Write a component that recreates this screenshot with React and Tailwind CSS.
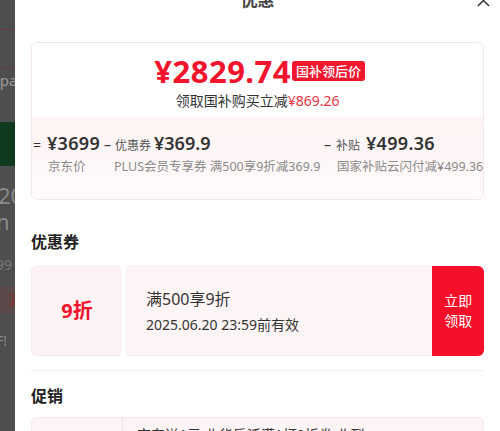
import React from "react";

const font = { fontFamily: '"Noto Sans", "Noto Sans CJK SC", sans-serif' };

const BackdropStrip = () => (
  <div className="w-[15px] shrink-0 bg-[#4e4e4e] overflow-hidden whitespace-nowrap">
    <div className="h-[30px] border-b border-[#6a3a3a]" />
    <div className="h-[38px] border-b border-[#6a3a3a]" />
    <div className="mt-[2px] text-[15px] text-[#9a9a9a] leading-[20px] -ml-[4px]">ipa</div>
    <div className="mt-[32px] h-[44px] bg-[#0f3a1e]" />
    <div className="mt-[16px] text-[22px] text-[#8a8a8a] leading-[26px] -ml-[2px]">20</div>
    <div className="text-[22px] text-[#8a8a8a] leading-[26px] -ml-[4px]">n /</div>
    <div className="mt-[22px] text-[14px] text-[#777] leading-[18px] -ml-[4px]">99</div>
    <div className="mt-[12px] h-[28px] bg-[#5a4a4a] text-[13px] text-[#8a2a2a] pl-[8px] leading-[28px]">满</div>
    <div className="mt-[18px] text-[14px] text-[#888] leading-[18px] -ml-[4px]">F!</div>
  </div>
);

const PriceCard = () => (
  <div className="mx-[16px] rounded-[6px] border border-[#f6e6e8]">
    <div className="bg-white rounded-t-[6px] pt-[11px] pb-[7px] flex flex-col items-center">
      <div className="flex items-center gap-[1px] ml-[4px]">
        <span className="text-[#f2132c] font-bold text-[31px] leading-[34px] tracking-[0.5px]">¥2829.74</span>
        <span className="bg-[#f0182e] text-white text-[13px] leading-[20px] px-[4px] rounded-[3px] font-medium">国补领后价</span>
      </div>
      <div className="text-[14px] text-[#333] leading-[20px] mt-[3px]">
        领取国补购买立减<span className="text-[#e8323f]">¥869.26</span>
      </div>
    </div>
    <div className="bg-gradient-to-b from-[#fdf3f3] to-[#fffafa] rounded-b-[6px] pt-[13px] pb-[23px] whitespace-nowrap">
      <div className="flex text-[#333]">
        <div className="w-[72px] pl-[1px] flex flex-col">
          <div className="flex items-baseline">
            <span className="text-[14px] mr-[6px]">=</span>
            <span className="text-[18px] font-semibold leading-[24px] tracking-[0.3px]">¥3699</span>
          </div>
          <span className="text-[12.5px] text-[#8a8a8a] mt-[3px] ml-[15px]">京东价</span>
        </div>
        <div className="w-[220px] flex flex-col">
          <div className="flex items-baseline">
            <span className="text-[14px] mr-[4px]">–</span>
            <span className="text-[12px] text-[#555] mr-[3px]">优惠券</span>
            <span className="text-[18px] font-semibold leading-[24px]">¥369.9</span>
          </div>
          <span className="text-[12.5px] text-[#8a8a8a] mt-[3px] ml-[10px]">PLUS会员专享券 满500享9折减369.9</span>
        </div>
        <div className="flex flex-col">
          <div className="flex items-baseline">
            <span className="text-[14px] mr-[5px]">–</span>
            <span className="text-[12px] text-[#555] mr-[6px]">补贴</span>
            <span className="text-[18px] font-semibold leading-[24px] tracking-[0.3px]">¥499.36</span>
          </div>
          <span className="text-[12.5px] text-[#8a8a8a] mt-[3px] ml-[13px]">国家补贴云闪付减¥499.36</span>
        </div>
      </div>
    </div>
  </div>
);

const CouponCard = () => (
  <div className="mx-[16px] flex h-[90px]">
    <div className="w-[91px] bg-[#fdf3f4] rounded-l-[6px] border border-r-0 border-[#f8e8ea] flex items-center justify-center">
      <span className="text-[#f2132c] text-[20px] font-bold">9折</span>
    </div>
    <div className="w-[3px] bg-white relative">
      <div className="absolute -top-[3px] left-[-2px] w-[7px] h-[7px] rounded-full bg-white" />
      <div className="absolute -bottom-[3px] left-[-2px] w-[7px] h-[7px] rounded-full bg-white" />
    </div>
    <div className="flex-1 bg-[#fdf5f5] border border-l-0 border-r-0 border-[#f8e8ea] flex flex-col justify-center pl-[21px]">
      <span className="text-[16px] text-[#333] leading-[22px]">满500享9折</span>
      <span className="text-[14px] text-[#333] leading-[20px] mt-[5px]">2025.06.20 23:59前有效</span>
    </div>
    <div className="w-[52px] bg-[#f50f28] rounded-r-[6px] flex flex-col items-center justify-center text-white text-[14px] leading-[20px]">
      <span>立即</span>
      <span>领取</span>
    </div>
  </div>
);

export default function App() {
  return (
    <div className="w-[500px] h-[431px] flex overflow-hidden bg-white" style={font}>
      <BackdropStrip />
      <div className="flex-1 bg-white flex flex-col">
        <div className="relative h-[28px] -mt-[13px] flex items-center justify-center">
          <span className="text-[17px] font-semibold text-[#444]">优惠</span>
          <svg className="absolute right-[10px] top-[7px]" width="13" height="13" viewBox="0 0 14 14">
            <path d="M1 1 L13 13 M13 1 L1 13" stroke="#333" strokeWidth="1.6" />
          </svg>
        </div>
        <div className="mt-[29px]">
          <PriceCard />
        </div>
        <div className="h-[7px] bg-[#f5f6fa] mt-[16px]" />
        <div className="px-[16px] mt-[15px] text-[16px] font-semibold text-[#222] leading-[22px]">优惠券</div>
        <div className="mt-[13px]">
          <CouponCard />
        </div>
        <div className="mx-[16px] mt-[14px] border-t border-[#f0f0f0]" />
        <div className="px-[16px] mt-[14px] text-[16px] font-semibold text-[#222] leading-[22px]">促销</div>
        <div className="mx-[16px] mt-[10px] flex h-[60px] rounded-[6px] border border-[#f8e8ea] bg-[#fdf5f5]">
          <div className="w-[91px] border-r border-[#f0e0e0]" />
          <div className="pl-[14px] pt-[6px] text-[14px] text-[#333]">京东送1元·北华乐活满1打9折券·北到</div>
        </div>
      </div>
    </div>
  );
}
